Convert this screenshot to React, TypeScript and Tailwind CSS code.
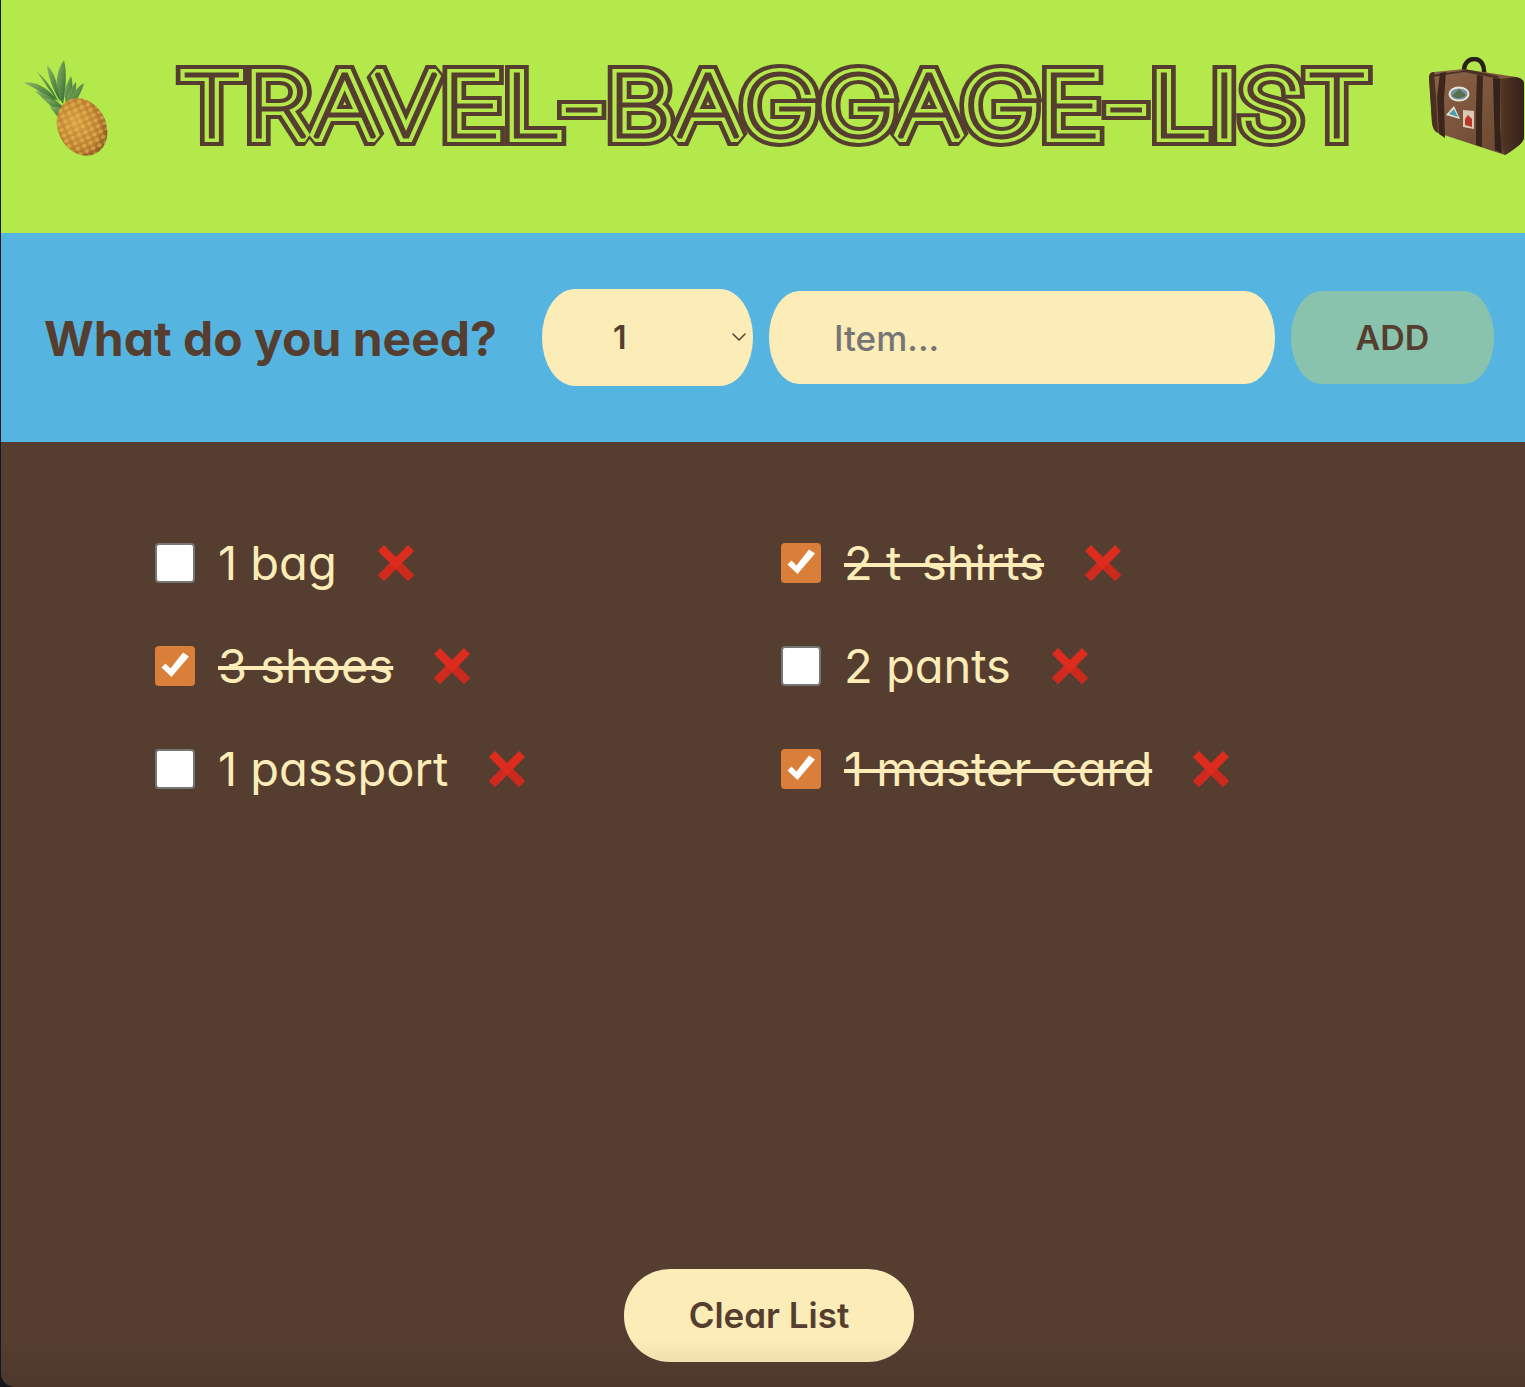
import React, { useState } from 'react';
import { ChevronDown } from 'lucide-react';

interface BaggageItem {
  id: number;
  label: string;
  packed: boolean;
}

const initialItems: BaggageItem[] = [
  { id: 1, label: '1 bag', packed: false },
  { id: 2, label: '2 t-shirts', packed: true },
  { id: 3, label: '3 shoes', packed: true },
  { id: 4, label: '2 pants', packed: false },
  { id: 5, label: '1 passport', packed: false },
  { id: 6, label: '1 master-card', packed: true },
];

// Same text drawn three times with narrower strokes, so the outlines nest like the striped title font
const titleLayers = [
  { stroke: '#553e30', width: 18 },
  { stroke: '#b4e94b', width: 10 },
  { stroke: '#553e30', width: 3 },
];

function Title() {
  return (
    <h1 className="ml-[60px] shrink-0">
      <svg width="1215" height="110" viewBox="0 0 1215 110" className="block">
        {titleLayers.map((layer, i) => (
          <text
            key={i}
            x="12"
            y="85"
            fontFamily="Inter, sans-serif"
            fontWeight="100"
            fontSize="87"
            letterSpacing="2"
            textLength="1191"
            lengthAdjust="spacingAndGlyphs"
            fill={layer.stroke}
            stroke={layer.stroke}
            strokeWidth={layer.width}
            strokeLinejoin="miter"
            strokeMiterlimit="1.6"
            aria-hidden={i > 0}
          >
            TRAVEL-BAGGAGE-LIST
          </text>
        ))}
      </svg>
    </h1>
  );
}

function Pineapple() {
  return (
    <svg width="84" height="98" viewBox="0 0 84 98" className="shrink-0">
      <defs>
        <radialGradient id="fruit" cx="0.42" cy="0.38" r="0.72">
          <stop offset="0" stopColor="#d9a043" />
          <stop offset="0.65" stopColor="#bd7f30" />
          <stop offset="1" stopColor="#74441c" />
        </radialGradient>
        <linearGradient id="leaf" x1="0" y1="0" x2="1" y2="1">
          <stop offset="0" stopColor="#8db368" />
          <stop offset="1" stopColor="#2f6b2c" />
        </linearGradient>
        <pattern id="scales" width="7" height="6" patternUnits="userSpaceOnUse" patternTransform="rotate(-25)">
          <path d="M3.5 0.5 6.5 3 3.5 5.5 0.5 3Z" fill="#e8c25a" opacity="0.55" />
          <circle cx="0" cy="0" r="1" fill="#c0553a" opacity="0.55" />
        </pattern>
        <clipPath id="fruitClip">
          <ellipse cx="58" cy="69" rx="24" ry="30" transform="rotate(-27 58 69)" />
        </clipPath>
      </defs>
      <g fill="url(#leaf)">
        <path d="M40 2C34 10 31 22 33 38L39 46C42 30 43 14 40 2Z" />
        <path d="M23 7C24 18 28 30 36 43L32 23C30 16 27 11 23 7Z" />
        <path d="M0 25C10 23 22 28 33 42L24 40C15 33 8 28 0 25Z" />
        <path d="M12 13C20 19 28 29 35 45L24 30C20 24 16 18 12 13Z" />
        <path d="M11 33C20 34 28 39 37 47L24 45C20 41 15 37 11 33Z" />
        <path d="M18 40C26 40 34 44 41 50L30 52C26 47 22 43 18 40Z" />
        <path d="M26 49C32 48 38 50 43 52L33 58 26 49Z" />
        <path d="M47 18C50 26 48 40 43 50L40 36C41 30 44 23 47 18Z" />
        <path d="M52 24C53 32 50 41 44 50L43 40C45 34 48 28 52 24Z" />
        <path d="M60 25C58 34 52 44 44 52L47 39C50 33 55 28 60 25Z" />
        <path d="M58 43C54 45 50 49 45 53L52 46Z" />
      </g>
      <ellipse cx="58" cy="69" rx="24" ry="30" transform="rotate(-27 58 69)" fill="url(#fruit)" />
      <rect x="20" y="30" width="64" height="68" fill="url(#scales)" clipPath="url(#fruitClip)" />
    </svg>
  );
}

function Suitcase() {
  return (
    <svg width="97" height="100" viewBox="0 0 97 100" className="ml-auto shrink-0">
      <defs>
        <linearGradient id="hide" x1="0" y1="0" x2="1" y2="1">
          <stop offset="0" stopColor="#8d6347" />
          <stop offset="1" stopColor="#674530" />
        </linearGradient>
        <linearGradient id="hideSide" x1="0" y1="0" x2="1" y2="0">
          <stop offset="0" stopColor="#553725" />
          <stop offset="1" stopColor="#33211a" />
        </linearGradient>
      </defs>
      <path d="M36 17C35 7 40 2 46 2C53 2 57 8 56 18" fill="none" stroke="#2b1f1a" strokeWidth="4.5" />
      <path d="M1 21C1 17 3 15 6 15L36 12 88 20C92 21 96 23 96 27L96 80C96 85 90 90 77 98L10 76C6 74 5 71 4 66Z" fill="url(#hide)" />
      <path d="M72 22 88 20C93 21 96 23 96 27L96 80C96 85 90 90 77 98C74 92 73 86 73 78Z" fill="url(#hideSide)" />
      <path d="M1 21C1 17 3 15 6 15L8 40 10 76C6 74 5 71 4 66Z" fill="#4a3020" />
      <path d="M2 18 33 14 36 12 70 19 72 22 36 15 4 20Z" fill="#4a3020" />
      <path d="M12 16 18 15 16 42 17 81 11 77 9 40Z" fill="#3a261b" />
      <path d="M49 18 55 19 54 60 54 90 48 88 48 50Z" fill="#3a261b" />
      <path d="M65 21 72 22 72 70 74 96 67 93 66 60Z" fill="#33211a" />
      <ellipse cx="31" cy="37" rx="10.5" ry="7.5" fill="#e8e6dc" />
      <ellipse cx="31" cy="37" rx="8.5" ry="5.5" fill="#6f93a0" />
      <path d="M24 39 31 32 38 38C34 42 28 42 24 39Z" fill="#5c6e4c" />
      <path d="M26 49 32 62 18 58Z" fill="#dfe3cf" />
      <path d="M26 52 30 60 21 57Z" fill="#4f9bb0" />
      <path d="M35 53 46 54 46 72 35 70Z" fill="#dcc9b4" />
      <path d="M37 62 40 58 44 62 44 70 37 68Z" fill="#b8392c" />
    </svg>
  );
}

function RemoveIcon() {
  return (
    <svg width="36" height="36" viewBox="0 0 36 36" className="shrink-0 block">
      <path d="M6 0 18 12 30 0 36 6 24 18 36 30 30 36 18 24 6 36 0 30 12 18 0 6Z" fill="#dd2c1e" />
      <path d="M18 24 6 36 0 30 12 18Z" fill="#cf2a1d" />
      <path d="M18 24 30 36 36 30 24 18Z" fill="#cb291c" />
    </svg>
  );
}

export default function App() {
  const [items, setItems] = useState(initialItems);

  const toggle = (id: number) => {
    setItems((prev) => prev.map((it) => (it.id === id ? { ...it, packed: !it.packed } : it)));
  };

  return (
    <div className="w-[1525px] h-[1387px] bg-[#14181c] pl-[1px] [font-family:Inter,sans-serif] [font-feature-settings:'cv11']">
      <div className="relative flex flex-col h-full overflow-hidden rounded-bl-[14px]">
        <header className="flex items-center h-[233px] shrink-0 bg-[#b4e94b] pl-[23px] pb-[20px]">
          <Pineapple />
          <Title />
          <Suitcase />
        </header>

        <form className="flex items-center h-[209px] shrink-0 bg-[#56b5e0] pl-[43px]" onSubmit={(e) => e.preventDefault()}>
          <label className="w-[498px] pt-[3px] text-[48px] font-bold text-[#553e30] whitespace-nowrap">What do you need?</label>
          <div className="relative">
            <select className="block w-[211px] h-[97px] appearance-none rounded-[33px/48px] bg-[#fcecb8] pl-[71px] text-[32px] font-semibold text-[#553e30] outline-none">
              <option>1</option>
              <option>2</option>
              <option>3</option>
            </select>
            <ChevronDown className="absolute right-[2px] top-[36px] text-[#553e30] pointer-events-none" size={24} strokeWidth={1.5} />
          </div>
          <input
            placeholder="Item..."
            className="w-[506px] h-[93px] ml-[16px] rounded-[30px/46px] bg-[#fcecb8] pl-[65px] text-[35px] font-medium text-[#553e30] placeholder:text-[#757575] outline-none"
          />
          <button className="w-[203px] h-[93px] ml-[16px] rounded-[30px/46px] bg-[#8ac3ad] text-[34px] font-semibold text-[#553e30]">ADD</button>
        </form>

        <main className="flex flex-col flex-1 bg-[#553e30] pt-[101px] pl-[154px]">
          <ul className="grid grid-cols-[626px_1fr] gap-y-[63px]">
            {items.map((item) => (
              <li key={item.id} className="flex items-center h-10">
                <label className="relative flex items-center shrink-0">
                  <input
                    type="checkbox"
                    checked={item.packed}
                    onChange={() => toggle(item.id)}
                    className="w-10 h-10 appearance-none rounded-[4px] border-2 border-[#767676] bg-white checked:border-0 checked:bg-[#d97f3a]"
                  />
                  {item.packed && (
                    <svg width="40" height="40" viewBox="0 0 40 40" className="absolute left-0 top-0 pointer-events-none">
                      <path d="M6.5 21.5 10.5 17.5 15.5 22.5 28 6.5 34 10.5 16.5 31Z" fill="#fff" />
                    </svg>
                  )}
                </label>
                <span
                  className={`ml-[23px] text-[47px] leading-[56px] text-[#fcecb8] whitespace-nowrap ${
                    item.packed ? 'line-through decoration-[4px]' : ''
                  }`}
                >
                  {item.label}
                </span>
                <span className="ml-[41px]">
                  <RemoveIcon />
                </span>
              </li>
            ))}
          </ul>
          <button
            onClick={() => setItems([])}
            className="self-start mt-auto mb-[25px] ml-[469px] w-[290px] h-[93px] rounded-[46px] bg-[#fcecb8] text-[35px] font-semibold text-[#553e30]"
          >
            Clear List
          </button>
        </main>

        <div className="absolute left-0 right-0 bottom-0 h-[50px] bg-gradient-to-b from-transparent to-black/10 pointer-events-none" />
      </div>
    </div>
  );
}
